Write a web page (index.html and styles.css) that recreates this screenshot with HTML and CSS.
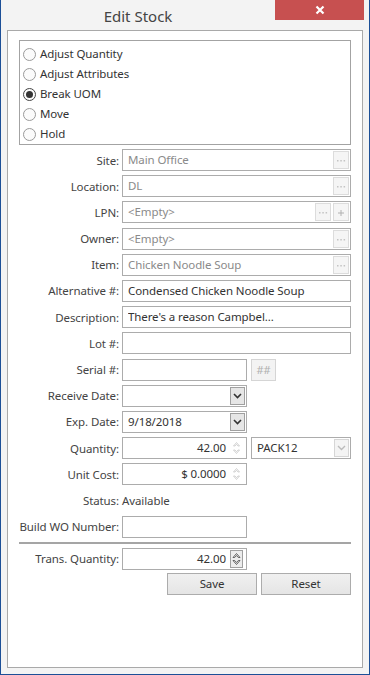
FILE: index.html
```html
<!DOCTYPE html>
<html>
<head>
<meta charset="utf-8">
<link rel="stylesheet" href="styles.css">
</head>
<body>
<div class="window">
  <div class="titlebar">
    <div class="title">Edit Stock</div>
    <div class="close"><svg width="10" height="10" viewBox="0 0 10 10"><path d="M1.5 1.5 L8.5 8.5 M8.5 1.5 L1.5 8.5" stroke="#fff" stroke-width="2.2" fill="none"/></svg></div>
  </div>
  <div class="panel">
    <div class="radios">
      <div class="radio"><span class="circle"></span>Adjust Quantity</div>
      <div class="radio"><span class="circle"></span>Adjust Attributes</div>
      <div class="radio"><span class="circle checked"></span>Break UOM</div>
      <div class="radio"><span class="circle"></span>Move</div>
      <div class="radio"><span class="circle"></span>Hold</div>
    </div>
    <div class="form">
      <div class="row"><span class="lbl">Site:</span>
        <div class="field full dis"><span class="val">Main Office</span>
          <span class="ibtn"><svg width="14" height="16" viewBox="0 0 14 16"><rect x="3" y="8" width="1.5" height="1.5" fill="#c4c4c4"/><rect x="6.3" y="8" width="1.5" height="1.5" fill="#c4c4c4"/><rect x="9.6" y="8" width="1.5" height="1.5" fill="#c4c4c4"/></svg></span></div></div>
      <div class="row"><span class="lbl">Location:</span>
        <div class="field full dis"><span class="val">DL</span>
          <span class="ibtn"><svg width="14" height="16" viewBox="0 0 14 16"><rect x="3" y="8" width="1.5" height="1.5" fill="#c4c4c4"/><rect x="6.3" y="8" width="1.5" height="1.5" fill="#c4c4c4"/><rect x="9.6" y="8" width="1.5" height="1.5" fill="#c4c4c4"/></svg></span></div></div>
      <div class="row"><span class="lbl">LPN:</span>
        <div class="field full dis"><span class="val">&lt;Empty&gt;</span>
          <span class="ibtn"><svg width="14" height="16" viewBox="0 0 14 16"><rect x="3" y="8" width="1.5" height="1.5" fill="#c4c4c4"/><rect x="6.3" y="8" width="1.5" height="1.5" fill="#c4c4c4"/><rect x="9.6" y="8" width="1.5" height="1.5" fill="#c4c4c4"/></svg></span>
          <span class="ibtn plus"><svg width="14" height="16" viewBox="0 0 14 16"><path d="M4 9 H10 M7 6 V12" stroke="#b0b0b0" stroke-width="1" fill="none"/></svg></span></div></div>
      <div class="row"><span class="lbl">Owner:</span>
        <div class="field full dis"><span class="val">&lt;Empty&gt;</span>
          <span class="ibtn"><svg width="14" height="16" viewBox="0 0 14 16"><rect x="3" y="8" width="1.5" height="1.5" fill="#c4c4c4"/><rect x="6.3" y="8" width="1.5" height="1.5" fill="#c4c4c4"/><rect x="9.6" y="8" width="1.5" height="1.5" fill="#c4c4c4"/></svg></span></div></div>
      <div class="row"><span class="lbl">Item:</span>
        <div class="field full dis"><span class="val">Chicken Noodle Soup</span>
          <span class="ibtn"><svg width="14" height="16" viewBox="0 0 14 16"><rect x="3" y="8" width="1.5" height="1.5" fill="#c4c4c4"/><rect x="6.3" y="8" width="1.5" height="1.5" fill="#c4c4c4"/><rect x="9.6" y="8" width="1.5" height="1.5" fill="#c4c4c4"/></svg></span></div></div>
      <div class="row"><span class="lbl">Alternative #:</span>
        <div class="field full"><span class="val">Condensed Chicken Noodle Soup</span></div></div>
      <div class="row"><span class="lbl">Description:</span>
        <div class="field full"><span class="val">There's a reason Campbel...</span></div></div>
      <div class="row"><span class="lbl">Lot #:</span>
        <div class="field full"></div></div>
      <div class="row"><span class="lbl">Serial #:</span>
        <div class="field half"></div>
        <span class="hashbtn">##</span></div>
      <div class="row"><span class="lbl">Receive Date:</span>
        <div class="field half"><span class="val"></span>
          <span class="dd"><svg width="9" height="6" viewBox="0 0 9 6"><path d="M1 1 L4.5 4.5 L8 1" stroke="#333" stroke-width="1.6" fill="none"/></svg></span></div></div>
      <div class="row"><span class="lbl">Exp. Date:</span>
        <div class="field half"><span class="val">9/18/2018</span>
          <span class="dd"><svg width="9" height="6" viewBox="0 0 9 6"><path d="M1 1 L4.5 4.5 L8 1" stroke="#333" stroke-width="1.6" fill="none"/></svg></span></div></div>
      <div class="row"><span class="lbl">Quantity:</span>
        <div class="field half"><span class="val num">42.00</span>
          <span class="spin"><svg width="9" height="18" viewBox="0 0 9 18"><path d="M1.5 7 L4.5 3.5 L7.5 7 L6 7 L4.5 5.3 L3 7 Z" stroke="#c8c8c8" stroke-width="0.8" fill="none"/><path d="M1.5 11 L4.5 14.5 L7.5 11 L6 11 L4.5 12.7 L3 11 Z" stroke="#c8c8c8" stroke-width="0.8" fill="none"/></svg></span></div>
        <div class="field combo dis"><span class="val dark">PACK12</span>
          <span class="dd ddis"><svg width="9" height="6" viewBox="0 0 9 6"><path d="M1 1 L4.5 4.5 L8 1" stroke="#bbb" stroke-width="1.4" fill="none"/></svg></span></div></div>
      <div class="row"><span class="lbl">Unit Cost:</span>
        <div class="field half"><span class="val num">$ 0.0000</span>
          <span class="spin"><svg width="9" height="18" viewBox="0 0 9 18"><path d="M1.5 7 L4.5 3.5 L7.5 7 L6 7 L4.5 5.3 L3 7 Z" stroke="#c8c8c8" stroke-width="0.8" fill="none"/><path d="M1.5 11 L4.5 14.5 L7.5 11 L6 11 L4.5 12.7 L3 11 Z" stroke="#c8c8c8" stroke-width="0.8" fill="none"/></svg></span></div></div>
      <div class="row"><span class="lbl">Status:</span><span class="plain">Available</span></div>
      <div class="row"><span class="lbl">Build WO Number:</span>
        <div class="field half"></div></div>
    </div>
    <div class="sep"></div>
    <div class="row"><span class="lbl">Trans. Quantity:</span>
      <div class="field half"><span class="val num dark">42.00</span>
        <span class="spin on"><svg width="11" height="16" viewBox="0 0 11 16"><path d="M2 6.5 L5.5 2.5 L9 6.5 L7.3 6.5 L5.5 4.5 L3.7 6.5 Z" stroke="#555" stroke-width="0.9" fill="none"/><path d="M2 9.5 L5.5 13.5 L9 9.5 L7.3 9.5 L5.5 11.5 L3.7 9.5 Z" stroke="#555" stroke-width="0.9" fill="none"/></svg></span></div></div>
    <div class="buttons">
      <button class="btn">Save</button>
      <button class="btn">Reset</button>
    </div>
  </div>
</div>
</body>
</html>
```
FILE: styles.css
```css
* { box-sizing: border-box; }
body {
  margin: 0;
  font-family: "Noto Sans", "Open Sans", sans-serif;
  font-size: 11.5px;
  letter-spacing: -0.1px;
  color: #333;
}
.window {
  width: 370px;
  height: 675px;
  background: #f3f3f3;
  border: 1px solid #1c4f97;
  border-top: none;
  display: flex;
  flex-direction: column;
}
.titlebar {
  height: 30px;
  display: flex;
  align-items: flex-start;
  flex: none;
}
.title {
  flex: 1;
  text-align: center;
  font-size: 15px;
  letter-spacing: 0;
  line-height: 20px;
  padding-top: 6px;
  color: #444;
}
.close {
  width: 89px;
  height: 20px;
  margin-right: 5px;
  background: #c75050;
  display: flex;
  align-items: center;
  justify-content: center;
}
.close svg { display: block; }
.panel {
  flex: 1;
  margin: 0 6px 6px;
  border: 1px solid #a9a9a9;
  background: #fff;
  padding: 9px 11px 0;
}
.radios {
  border: 1px solid #a3a3a3;
  height: 105px;
  padding: 3px 0 0 3px;
}
.radio {
  height: 20px;
  display: flex;
  align-items: center;
  color: #333;
  line-height: 20px;
}
.circle {
  width: 13px;
  height: 13px;
  border-radius: 50%;
  border: 1px solid #9a9a9a;
  background: #fbfbfb;
  margin-right: 4px;
  display: flex;
  align-items: center;
  justify-content: center;
  flex: none;
}
.circle.checked { border-color: #444; }
.circle.checked::after {
  content: "";
  width: 7px;
  height: 7px;
  border-radius: 50%;
  background: #333;
}
.form {
  margin-top: 4px;
  display: flex;
  flex-direction: column;
  gap: 4.2px;
}
.row {
  height: 22px;
  display: flex;
  align-items: center;
}
.lbl {
  width: 100px;
  margin-right: 3px;
  text-align: right;
  color: #444;
  flex: none;
  white-space: nowrap;
}
.plain { color: #444; }
.field {
  height: 22px;
  border: 1px solid #acacac;
  background: #fff;
  display: flex;
  align-items: center;
  padding: 0 1px 0 5px;
  flex: none;
}
.field.full { width: 229px; }
.field.half { width: 125px; }
.field.combo { width: 100px; margin-left: 4px; }
.val {
  flex: 1;
  white-space: nowrap;
  overflow: hidden;
  color: #333;
  line-height: 20px;
}
.dis .val { color: #8a8a8a; }
.dis .val.dark { color: #333; }
.val.num { text-align: right; padding-right: 4px; }
.ibtn {
  width: 16px;
  height: 18px;
  border: 1px solid #dcdcdc;
  background: #f5f5f5;
  display: flex;
  align-items: center;
  justify-content: center;
  flex: none;
}
.ibtn.plus { margin-left: 2px; }
.field.full .ibtn:first-of-type { margin-left: auto; }
.hashbtn {
  width: 25px;
  height: 22px;
  margin-left: 4px;
  border: 1px solid #d5d5d5;
  background: #f3f3f3;
  color: #b0b0b0;
  font-size: 11px;
  display: flex;
  align-items: center;
  justify-content: center;
}
.dd {
  width: 15px;
  height: 18px;
  border: 1px solid #a0a0a0;
  background: #e6e6e6;
  display: flex;
  align-items: center;
  justify-content: center;
  margin-left: auto;
  flex: none;
}
.dd.ddis { border-color: #d6d6d6; background: #f4f4f4; }
.spin {
  width: 13px;
  height: 18px;
  display: flex;
  align-items: center;
  justify-content: center;
  flex: none;
  margin-right: 2px;
}
.spin.on {
  border: 1px solid #a0a0a0;
  background: #ececec;
  margin-right: 2px;
}
.sep {
  height: 2px;
  background: #a5a5a5;
  margin: 4px 0 4px;
}
.buttons {
  display: flex;
  justify-content: flex-end;
  gap: 4px;
  margin-top: 3px;
}
.btn {
  width: 90px;
  height: 22px;
  border: 1px solid #acacac;
  background: linear-gradient(#f0f0f0, #e5e5e5);
  font-family: "Noto Sans", "Open Sans", sans-serif;
  font-size: 11.5px;
  letter-spacing: -0.1px;
  color: #333;
  padding: 0;
}
```
